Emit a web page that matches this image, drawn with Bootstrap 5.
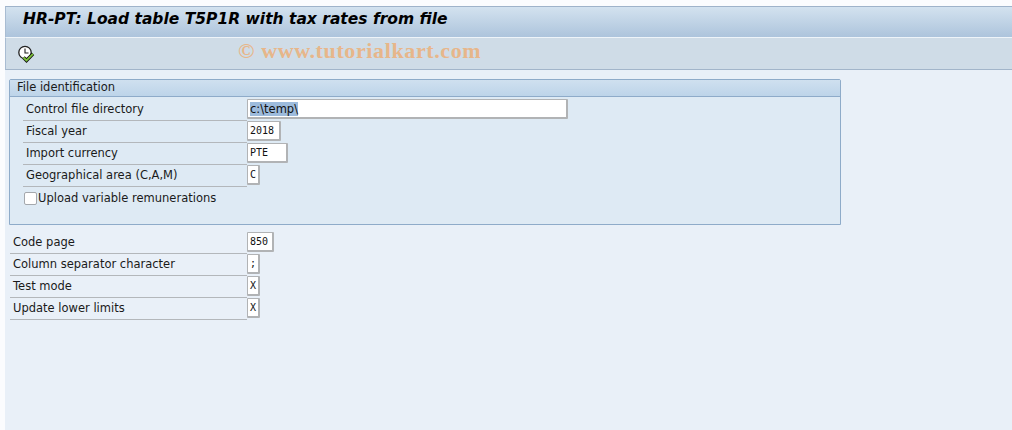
<!DOCTYPE html>
<html lang="en">
<head>
<meta charset="utf-8">
<title>HR-PT: Load table T5P1R</title>
<link href="https://cdn.jsdelivr.net/npm/bootstrap@5.3.0/dist/css/bootstrap.min.css" rel="stylesheet">
<style>
html,body{height:430px;overflow:hidden}
body{background:#fbfcfe;font-family:"DejaVu Sans",sans-serif;font-size:11px;color:#1a1a1a}
.shell{height:430px;padding:6px 0 0 5px;display:flex;flex-direction:column}
.title-bar{height:31px;flex:none;border-top:1px solid #9fb3ca;border-left:1px solid #a8bcd2;background:linear-gradient(#d3e2ef,#adc4dc);padding-left:17px}
.title-bar h1{margin:0;font:italic 700 15.5px/25px "DejaVu Sans",sans-serif;color:#000}
.tool-bar{height:33px;flex:none;border-top:1px solid #eef4f9;border-bottom:1px solid #a2b5ca;border-left:1px solid #a8bcd2;background:#cfdce7;padding-left:11px;gap:0}
.mark-text{margin-left:203px;font:700 22px/1 "Liberation Serif",serif;color:#e7b68a;letter-spacing:.62px;margin-top:-5px}
.work{flex:1;background:#e9f0f8;padding:9px 0 0 4px}
.group-box{width:832px;height:146px;background:#deeaf4;border:1px solid #8eabc9;border-radius:2px 2px 0 0;margin-bottom:7px}
.group-head{height:17px;background:linear-gradient(#cfe0ef,#bdd4e9);border-bottom:1px solid #8eabc9;padding-left:7px;line-height:15px;font-size:11.5px}
.group-rows{padding:2px 0 0 13px}
.field-row{height:22px;display:flex;align-items:stretch}
.field-label{width:224px;flex:none;border-bottom:1px solid #b3b7bb;padding:2px 0 0 3px;line-height:17px;font-size:11.5px}
.field-box{height:20px;margin:0;padding:0 2px;border:2px solid #b1b3b5;border-width:1px 2px 2px 1px;border-radius:1px;background:#fff;line-height:18px;color:#111;font-family:"DejaVu Sans Mono",monospace;font-size:10px;box-shadow:none}
.prop{font-family:"DejaVu Sans",sans-serif;font-size:11.5px}
.sel{background:#9dbbdc}
.wd-dir{width:321px}.wd-year{width:34px}.wd-cur{width:41px}.wd-one{width:13px}.wd-page{width:27px}
.chk-row{height:22px;gap:1px;padding-left:1px}
.chk-row .form-check-input{width:13px;height:13px;margin:0;border:1px solid #a4a8ad;border-radius:2px;flex:none}
.chk-row label{font-size:11.5px;line-height:17px}
.plain-rows{padding-left:1px}
.plain-rows .field-label{width:237px;padding-left:3px}
</style>
</head>
<body>
<div class="shell">
  <div class="title-bar"><h1>HR-PT: Load table T5P1R with tax rates from file</h1></div>
  <div class="tool-bar d-flex align-items-center">
    <svg width="18" height="18" viewBox="0 0 18 18" aria-label="Execute">
      <circle cx="8" cy="7.5" r="6.2" fill="#fff" stroke="#222" stroke-width="1.3"/>
      <path d="M8 3.5V8H11.5" fill="none" stroke="#222" stroke-width="1.1"/>
      <path d="M6.5 12.5L9.5 15.5L16 8.8" fill="none" stroke="#111" stroke-width="3.4"/>
      <path d="M6.5 12.5L9.5 15.5L16 8.8" fill="none" stroke="#7cc23a" stroke-width="1.8"/>
    </svg>
    <span class="mark-text">© www.tutorialkart.com</span>
  </div>
  <div class="work">
    <div class="group-box">
      <div class="group-head">File identification</div>
      <div class="group-rows">
        <div class="field-row"><div class="field-label">Control file directory</div><div class="form-control field-box prop wd-dir"><span class="sel">c:\temp\</span></div></div>
        <div class="field-row"><div class="field-label">Fiscal year</div><div class="form-control field-box wd-year">2018</div></div>
        <div class="field-row"><div class="field-label">Import currency</div><div class="form-control field-box wd-cur">PTE</div></div>
        <div class="field-row"><div class="field-label">Geographical area (C,A,M)</div><div class="form-control field-box wd-one">C</div></div>
        <div class="chk-row d-flex align-items-center">
          <input class="form-check-input" type="checkbox" id="upl">
          <label for="upl">Upload variable remunerations</label>
        </div>
      </div>
    </div>
    <div class="plain-rows">
      <div class="field-row"><div class="field-label">Code page</div><div class="form-control field-box wd-page">850</div></div>
      <div class="field-row"><div class="field-label">Column separator character</div><div class="form-control field-box wd-one">;</div></div>
      <div class="field-row"><div class="field-label">Test mode</div><div class="form-control field-box wd-one">X</div></div>
      <div class="field-row"><div class="field-label">Update lower limits</div><div class="form-control field-box wd-one">X</div></div>
    </div>
  </div>
</div>
<script src="https://cdn.jsdelivr.net/npm/bootstrap@5.3.0/dist/js/bootstrap.bundle.min.js"></script>
</body>
</html>
